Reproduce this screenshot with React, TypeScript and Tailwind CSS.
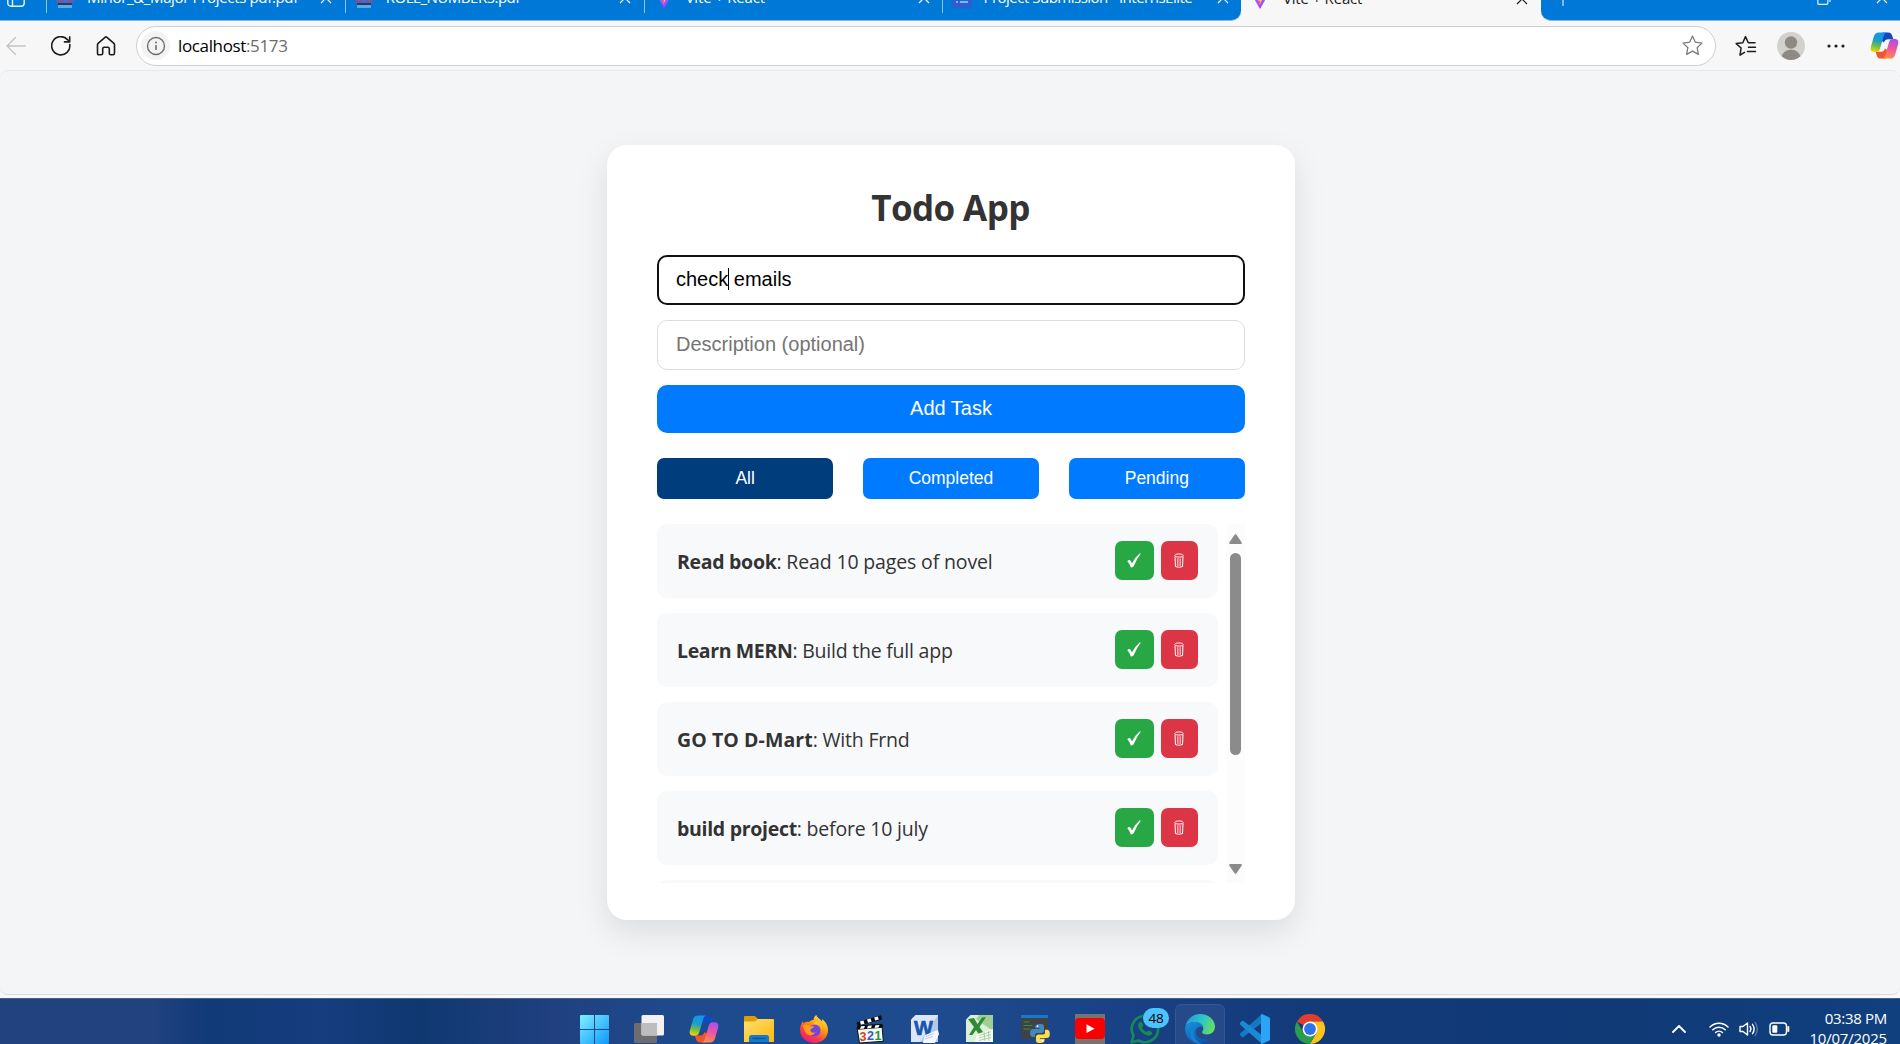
import type { ReactNode } from "react";

function CloseGlyph({ className = "" }: { className?: string }) {
  return (
    <svg viewBox="0 0 12 12" className={"h-3 w-3 shrink-0 " + className} fill="none" stroke="currentColor" strokeWidth="1.2">
      <path d="M1 1l10 10M11 1L1 11" />
    </svg>
  );
}

function PdfIcon() {
  return (
    <svg viewBox="0 0 18 20" className="h-5 w-[18px] shrink-0">
      <rect x="2" y="0" width="14" height="20" rx="1.5" fill="#4c9fe0" />
      <rect x="0" y="5" width="18" height="10" rx="1.5" fill="#7456a0" />
      <path d="M3.500 13.300v-2.500h2M8 10.500v2.500h2v-2.500M13 13.300v-2.500h2" fill="none" stroke="#2f7fd0" strokeWidth="1.300" />
      <rect x="2" y="15" width="14" height="2" fill="#17406f" />
      <rect x="2" y="17" width="14" height="3" fill="#5aabe6" />
    </svg>
  );
}

function ViteIcon({ id }: { id: string }) {
  return (
    <svg viewBox="0 0 20 20" className="h-5 w-5 shrink-0">
      <defs>
        <linearGradient id={id} x1="0" y1="0" x2="0.6" y2="1">
          <stop offset="0" stopColor="#41d1ff" />
          <stop offset="0.5" stopColor="#9a5bff" />
          <stop offset="1" stopColor="#bd34fe" />
        </linearGradient>
      </defs>
      <path d="M0.5 3.5L10 20l9.5-16.5L10 5z" fill={`url(#${id})`} />
      <path d="M13.5 0L7 1.5l-.4 8 2.2-.5-.7 3.4 1.8-.6-.6 4.4 4-7.4-2.2.4.8-3.4z" fill="#ffbd2e" />
    </svg>
  );
}

function FormsIcon() {
  return (
    <svg viewBox="0 0 20 20" className="h-5 w-5 shrink-0">
      <rect width="20" height="20" rx="1.5" fill="#2b5fd0" />
      <path d="M4 9h2M4 14h2M8 9h8M8 14h8" stroke="#7db8f5" strokeWidth="1.8" />
    </svg>
  );
}

type TabData = { title: string; icon: ReactNode; text: string };

const tabs: TabData[] = [
  { title: "Minor_&_Major Projects pdf.pdf", icon: <PdfIcon />, text: "ml-[13px] tracking-[-0.34px]" },
  { title: "ROLL_NUMBERS.pdf", icon: <PdfIcon />, text: "ml-[13px] tracking-[-0.48px]" },
  { title: "Vite + React", icon: <ViteIcon id="vite1" />, text: "ml-[12px] tracking-[-0.18px]" },
  { title: "Project Submission - InternsElite", icon: <FormsIcon />, text: "ml-[11px] tracking-[-0.5px]" },
];

function TabStrip() {
  return (
    <div className="flex h-[21px] items-end overflow-hidden bg-[#f7f7f7] text-[15px] text-white">
      <div className="flex h-[45px] w-[1241px] shrink-0 items-center rounded-br-[10px] border-b border-[#7fbcec] bg-[#0078d7]">
        <div className="w-[46px] shrink-0 pl-[7px]">
          <svg viewBox="0 0 18 18" className="h-[18px] w-[18px]" fill="none" stroke="#e8f4ff" strokeWidth="1.4">
            <rect x="0.8" y="0.8" width="16.4" height="16.4" rx="3" />
            <path d="M5.5 1v16M1 5.5h16" />
          </svg>
        </div>
        {tabs.map((t) => (
          <div key={t.title} className="flex w-[298.8px] shrink-0 items-center pr-[12.500px]">
            <span className="mr-[9px] h-[30px] w-px bg-[#8cc4f0]" />
            {t.icon}
            <span className={"pb-[2px] leading-5 whitespace-nowrap " + t.text}>{t.title}</span>
            <CloseGlyph className="ml-auto" />
          </div>
        ))}
      </div>
      <div className="flex h-[45px] w-[300px] shrink-0 items-center pr-[13px] pl-[9px] text-[#1b1b1b]">
        <ViteIcon id="vite2" />
        <span className="ml-[13px] pb-[2px] leading-5 whitespace-nowrap tracking-[-0.18px]">Vite + React</span>
        <CloseGlyph className="ml-auto" />
      </div>
      <div className="flex h-[45px] flex-1 items-center rounded-bl-[10px] border-b border-[#7fbcec] bg-[#0078d7] pr-[12px] pl-[14px]">
        <svg viewBox="0 0 16 16" className="h-4 w-4" stroke="#d8ecfd" strokeWidth="1.2">
          <path d="M8 0v16M0 8h16" />
        </svg>
        <svg viewBox="0 0 14 14" className="mr-[45px] ml-auto h-[14px] w-[14px]" fill="none" stroke="#e8f4ff" strokeWidth="1.2">
          <rect x="0.8" y="3" width="10" height="10.3" rx="1" />
          <path d="M3 1h8.5q1.5 0 1.5 1.5V11" />
        </svg>
        <CloseGlyph />
      </div>
    </div>
  );
}

function CopilotIcon({ id, className = "" }: { id: string; className?: string }) {
  return (
    <svg viewBox="0 0 30 28" className={"shrink-0 " + className}>
      <defs>
        <linearGradient id={id + "a"} x1="0.5" y1="0" x2="0.3" y2="1">
          <stop offset="0" stopColor="#1495f0" />
          <stop offset="0.4" stopColor="#1a9ec8" />
          <stop offset="0.7" stopColor="#6fbe4a" />
          <stop offset="1" stopColor="#f7d400" />
        </linearGradient>
        <linearGradient id={id + "b"} x1="0.6" y1="0" x2="0.4" y2="1">
          <stop offset="0" stopColor="#a850ee" />
          <stop offset="0.5" stopColor="#f0569a" />
          <stop offset="1" stopColor="#ff8c4a" />
        </linearGradient>
      </defs>
      <path d="M13 .5h6c2 0 3.200 1 3.900 3l1.300 4H19c-2.500 0-3.600 1-4.500 3.500L12 9z" fill="#1149c4" />
      <path d="M17 27.500h-6c-2 0-3.200-1-3.900-3l-1.300-4H11c2.500 0 3.600-1 4.500-3.500L18 19z" fill="#f2552c" />
      <path d="M9 .5h8.500c-2.300.5-3 2.200-3.600 4.500l-3.500 12c-.8 2.600-1.800 3.700-4.200 3.700H4.500C1 20.700 0 18.500 1 15L4 4.500C5 1.700 6.500.5 9 .5z" fill={`url(#${id}a)`} />
      <path d="M21 27.500h-8.500c2.300-.5 3-2.200 3.600-4.500l3.500-12c.8-2.600 1.800-3.700 4.200-3.700h1.700C29 7.300 30 9.500 29 13l-3 10.500c-1 2.800-2.500 4-5 4z" fill={`url(#${id}b)`} />
    </svg>
  );
}

function Toolbar() {
  return (
    <div className="flex h-[49px] items-center bg-[#f7f7f7] pl-[6px] text-[#1d1d1d]">
      <svg viewBox="0 0 20 20" className="h-5 w-5" fill="none" stroke="#c4c4c4" strokeWidth="1.4" strokeLinecap="round" strokeLinejoin="round">
        <path d="M19.300 10H1M9.500 1.500L1 10l8.500 8.500" />
      </svg>
      <svg viewBox="0 0 20 20" className="ml-[25px] h-5 w-5" fill="none" stroke="currentColor" strokeWidth="1.6" strokeLinecap="round" strokeLinejoin="round">
        <path d="M18.800 8.500A9.100 9.100 0 1 1 16.500 3.600L18.600 5.400M18.700 0.900v5h-5.200" />
      </svg>
      <svg viewBox="0 0 20 20" className="ml-[25px] h-5 w-5" fill="none" stroke="currentColor" strokeWidth="1.6" strokeLinejoin="round">
        <path d="M1.500 8.700Q1.500 7.900 2.100 7.400L9 1.300Q10 .5 11 1.300L17.900 7.400Q18.500 7.900 18.500 8.700V17q0 1.800-1.500 1.800h-2.200q-1.500 0-1.500-1.500v-4.500q0-1.500-1.500-1.500H8.200q-1.500 0-1.500 1.500v4.500q0 1.500-1.500 1.500H3q-1.500 0-1.500-1.800z" />
      </svg>
      <div className="ml-[20px] flex h-10 w-[1580px] items-center rounded-full border border-[#cfcfcf] bg-white pr-[12px] pl-[4px]">
        <div className="flex h-[29px] w-[29px] items-center justify-center rounded-full bg-[#f3f3f3]">
          <svg viewBox="0 0 20 20" className="h-5 w-5" fill="none" stroke="#707070" strokeWidth="1.4">
            <circle cx="10" cy="10" r="8.500" />
            <path d="M10 9v5" strokeWidth="1.600" />
            <circle cx="10" cy="6.500" r="1" fill="#707070" stroke="none" />
          </svg>
        </div>
        <div className="ml-[8px] text-[17px] leading-5 tracking-[-0.36px] text-black">
          localhost<span className="text-[#6b6b6b]">:5173</span>
        </div>
        <svg viewBox="0 0 20 20" className="ml-auto h-[21px] w-[21px]" fill="none" stroke="#7a7a7a" strokeWidth="1.200" strokeLinejoin="round">
          <path d="M10 1l2.700 5.900 6.300.8-4.600 4.400 1.200 6.400L10 15.400 4.400 18.500l1.200-6.400L1 7.700l6.300-.8z" />
        </svg>
      </div>
      <svg viewBox="0 0 22 22" className="ml-[19px] h-[22px] w-[22px]" fill="none" stroke="currentColor" strokeWidth="1.500" strokeLinejoin="round" strokeLinecap="round">
        <path d="M9.500 17.300L5 20.200l1.100-7.200L1.200 8.600 7.800 7.800 10.500 1.600 13.300 7.800H20M13.500 12.200H20.500M12.500 16.600H20.500" />
      </svg>
      <svg viewBox="0 0 28 28" className="ml-[20px] h-7 w-7">
        <circle cx="14" cy="14" r="14" fill="#d3d1ce" />
        <circle cx="14" cy="10.500" r="6.200" fill="#8d8a86" />
        <path d="M4.600 24.300C6.500 19.500 10 17.800 14 17.800s7.500 1.700 9.400 6.500A14 14 0 0 1 4.600 24.300z" fill="#8d8a86" />
      </svg>
      <svg viewBox="0 0 18 4" className="ml-[21.500px] h-1 w-[18px]" fill="#1d1d1d">
        <circle cx="2" cy="2" r="1.600" />
        <circle cx="9" cy="2" r="1.600" />
        <circle cx="16" cy="2" r="1.600" />
      </svg>
      <CopilotIcon id="edge-copilot" className="ml-[25.500px] h-[27px] w-[29px]" />
    </div>
  );
}

type Task = { name: string; detail: string; nameTrack: string; detailTrack: string };

const tasks: Task[] = [
  { name: "Read book", detail: ": Read 10 pages of novel", nameTrack: "tracking-[-0.3px]", detailTrack: "tracking-[-0.15px]" },
  { name: "Learn MERN", detail: ": Build the full app", nameTrack: "tracking-[-0.37px]", detailTrack: "tracking-[-0.22px]" },
  { name: "GO TO D-Mart", detail: ": With Frnd", nameTrack: "tracking-[0.08px]", detailTrack: "tracking-[-0.2px]" },
  { name: "build project", detail: ": before 10 july", nameTrack: "tracking-[-0.3px]", detailTrack: "tracking-[-0.2px]" },
];

function TaskRow({ task }: { task: Task }) {
  return (
    <li className="flex h-[74px] shrink-0 items-center rounded-[10px] bg-[#f8f9fb] pr-5 pl-[20px]">
      <p className="pt-[2px] text-[19.500px] leading-7 whitespace-nowrap">
        <strong className={"font-bold " + task.nameTrack}>{task.name}</strong>
        <span className={task.detailTrack}>{task.detail}</span>
      </p>
      <button className="mb-[2px] ml-auto flex h-[39px] w-[39px] items-center justify-center rounded-[7px] bg-[#28a745] pt-px pr-[2px]">
        <svg viewBox="0 0 14 15" className="h-[15px] w-[14px]">
          <path d="M.3 8.300Q1.600 6.600 3 7.200Q4.200 8.200 4.900 10.400Q8.400 3.800 12.600.4L13.900.6Q9.600 6 6.500 13.600Q5 14.800 3.700 14.200Q2.300 10.200.3 8.300z" fill="#fff" />
        </svg>
      </button>
      <button className="mb-[2px] ml-[7px] flex h-[39px] w-[37px] items-center justify-center rounded-[7px] bg-[#dc3545] pt-px pr-px">
        <svg viewBox="0 0 10 15" className="h-[15px] w-[10px]" fill="none" stroke="#fff0f1">
          <path d="M1 3.300L1.500 13.300Q5 15.300 8.500 13.300L9 3.300" strokeWidth="1.100" />
          <ellipse cx="5" cy="2.500" rx="4.200" ry="1.600" strokeWidth="1" />
          <path d="M3.400 5.200L3.600 13M5 5.200V13M6.600 5.200L6.400 13" strokeWidth=".8" stroke="#f9cdd2" />
        </svg>
      </button>
    </li>
  );
}

function TodoCard() {
  return (
    <section className="flex h-[775px] w-[688px] flex-col rounded-[20px] bg-white px-[50px] pt-[38px] text-[#333] shadow-[0_12px_32px_rgba(0,0,0,0.1)]">
      <h1 className="pr-px text-center text-[35px] leading-[50px] font-bold tracking-[-0.6px]">Todo App</h1>
      <div className="mt-[22px] flex h-[50px] items-center rounded-[10px] border-2 border-[#101010] bg-white px-[17px] pb-[3px] font-['Liberation_Sans',Arial,sans-serif] text-[20px] text-black">
        <span>check</span>
        <span className="-mr-px h-[22px] w-px bg-black" />
        <span className="whitespace-pre"> emails</span>
      </div>
      <div className="mt-[15px] flex h-[50px] items-center rounded-[10px] border border-[#ddd] px-[18px] pb-[3px] font-['Liberation_Sans',Arial,sans-serif] text-[20px] text-[#757575]">
        Description (optional)
      </div>
      <button className="mt-[15px] h-12 rounded-[10px] bg-[#007bff] pb-[3px] font-['Liberation_Sans',Arial,sans-serif] text-[20px] text-white">
        Add Task
      </button>
      <div className="mt-[25px] grid grid-cols-3 gap-[29.500px] font-['Liberation_Sans',Arial,sans-serif] text-[17.500px] text-white">
        <button className="h-[41px] rounded-[7px] bg-[#003d7c]">All</button>
        <button className="h-[41px] rounded-[7px] bg-[#007bff]">Completed</button>
        <button className="h-[41px] rounded-[7px] bg-[#007bff]">Pending</button>
      </div>
      <div className="mt-[25px] flex h-[359px] gap-[8px] overflow-hidden">
        <ul className="flex flex-1 flex-col gap-[15px] overflow-hidden">
          {tasks.map((t) => (
            <TaskRow key={t.name} task={t} />
          ))}
          <li className="h-[74px] shrink-0 rounded-[10px] bg-[#f8f9fb]" />
        </ul>
        <div className="flex w-[19px] flex-col items-center bg-[#fcfcfc] pt-[10px] pb-[9px]">
          <svg viewBox="0 0 13 10" className="h-[10px] w-[13px]" fill="#8b8b8b">
            <path d="M5.300 1q1.200-1.500 2.400 0l5 7.400q.7 1.600-1 1.600H1.300Q-.4 10 .3 8.400z" />
          </svg>
          <span className="mt-[9px] h-[202px] w-[11px] rounded-full bg-[#8b8b8b]" />
          <svg viewBox="0 0 13 10" className="mt-auto h-[10px] w-[13px]" fill="#8b8b8b">
            <path d="M5.300 9q1.200 1.500 2.400 0l5-7.400Q13.400 0 11.700 0H1.300Q-.4 0 .3 1.600z" />
          </svg>
        </div>
      </div>
    </section>
  );
}

function WindowsIcon() {
  return (
    <svg viewBox="0 0 29 29" className="h-[29px] w-[29px]">
      <defs>
        <linearGradient id="win" x1="0" y1="0" x2="29" y2="29" gradientUnits="userSpaceOnUse">
          <stop offset="0" stopColor="#7df0ff" />
          <stop offset="1" stopColor="#0e98f8" />
        </linearGradient>
      </defs>
      <path d="M1 0H14V14H0V1Q0 0 1 0zM15 0H28Q29 0 29 1V14H15zM0 15H14V29H1Q0 29 0 28zM15 15H29V28Q29 29 28 29H15z" fill="url(#win)" />
    </svg>
  );
}

function TaskViewIcon() {
  return (
    <svg viewBox="0 0 30 28" className="h-7 w-[30px]">
      <rect x="0" y="8" width="23" height="20" rx="1.500" fill="#6d6d6f" />
      <rect x="7.500" y="0" width="22.500" height="20.500" rx="1.500" fill="#f2f2f3" />
      <path d="M7.500 8H23v12.500H9q-1.500 0-1.500-1.500z" fill="#bdbdbf" />
    </svg>
  );
}

function FolderIcon() {
  return (
    <svg viewBox="0 0 30 28" className="h-7 w-[30px]">
      <defs>
        <linearGradient id="fold" x1="0" y1="0" x2="1" y2="1">
          <stop offset="0" stopColor="#ffdf70" />
          <stop offset="1" stopColor="#fbb90f" />
        </linearGradient>
      </defs>
      <path d="M0 2q0-1 1-1h9q1 0 2 1l2 2v4H0z" fill="#e09c05" />
      <path d="M0 6.500h11l3-2.500h15q1 0 1 1v22H0z" fill="url(#fold)" />
      <path d="M5 27v-4.500q0-2.500 2.500-2.500h15q2.500 0 2.500 2.500V27z" fill="#0f7ad0" />
      <path d="M8.500 23.500h13" stroke="#0a4f92" strokeWidth="1.200" />
    </svg>
  );
}

function FirefoxIcon() {
  return (
    <svg viewBox="0 0 30 30" className="h-[30px] w-[30px]">
      <defs>
        <linearGradient id="ff" x1="0.85" y1="0" x2="0.2" y2="1">
          <stop offset="0" stopColor="#fff04a" />
          <stop offset="0.4" stopColor="#ff980e" />
          <stop offset="0.7" stopColor="#ff3d47" />
          <stop offset="1" stopColor="#e31587" />
        </linearGradient>
      </defs>
      <path d="M17.500 1c.5 3 4 4 5.500 6.500.3-.8 0-1.800-.3-2.500C27 7.500 29 12 29 16 29 23.700 23 29 15.300 29S1 23.500 1 16c0-4 1.600-7 3-9 0 1 .3 1.800.8 2.300C6 8 8 7.500 10 8c1.500-1.500 3-2 4.500-2 0-2 1.200-4 3-5z" fill="url(#ff)" />
      <circle cx="15.500" cy="16.500" r="6" fill="#7445dc" />
      <path d="M3.500 11.500C6.500 9.500 9.500 11 11 12.300h4c-.3 2-3 2-3.600 3.500-.2 2 2 3.700 5 2.500-2 4-8.500 4-10.500-.8C5 15.500 4.500 13.500 3.500 11.500z" fill="#ff9c1a" />
      <path d="M14.500 10.600c4-1.600 8 1 8 5.500 2-4-.5-9-4-9.500-2 .4-4 2-4 4z" fill="#ffc125" />
    </svg>
  );
}

function MediaPlayerIcon() {
  return (
    <svg viewBox="0 0 30 30" className="h-[30px] w-[30px] font-['Liberation_Sans',sans-serif]">
      <path d="M1.500 8.500L26 1.200l1.200 4.300L2.700 12z" fill="#0c0c0c" />
      <path d="M5 7.600l3.500-1 1 3.200-3.600 1zM12 5.500l3.600-1 1 3.300-3.600.9zM19.200 3.400l3.600-1 1 3.200-3.600 1z" fill="#fff" />
      <path d="M2 13.500L27 11.300l1.300 16L4.500 29z" fill="#f7f7f5" stroke="#111" strokeWidth="1" />
      <path d="M2 11.500l25.500-1.700.2 4L2.300 15.700z" fill="#0c0c0c" />
      <path d="M6 12.200l4-.3-1 2.700-4 .3zM13 11.700l4-.3-1 2.700-4 .3zM20.500 11.200l4-.3-1 2.700-4 .3z" fill="#fff" />
      <g fontSize="12.500" fontWeight="700">
        <text x="4.500" y="26.500" fill="#d2451a">3</text>
        <text x="12" y="26" fill="#2c62b8">2</text>
        <text x="19.500" y="25.500" fill="#24952f">1</text>
      </g>
    </svg>
  );
}

function WordIcon() {
  return (
    <svg viewBox="0 0 28 28" className="h-7 w-7">
      <path d="M0 4.500L4.500 0H27v27H0z" fill="#dbe6f6" />
      <path d="M27 0v27H9z" fill="#b3c9ea" />
      <text x="12.500" y="19.500" textAnchor="middle" fontSize="20" fontWeight="700" fontFamily="Liberation Sans, sans-serif" fill="#1755ae" stroke="#1755ae" strokeWidth=".6">W</text>
      <path d="M14 20l13-5 1 4-4 9H12z" fill="#f5f8fd" />
      <path d="M15 21.500l8-3M14 24l8-2.500" stroke="#a9bede" strokeWidth=".8" />
    </svg>
  );
}

function ExcelIcon() {
  return (
    <svg viewBox="0 0 28 28" className="h-7 w-7">
      <path d="M0 4.500L4.500 0H27v27H0z" fill="#dcefd8" />
      <path d="M27 0v16L10 4l3-4z" fill="#9fcf95" />
      <path d="M2 4l6-1 3.500 6L16 2.500l4-.5-6.500 10L19 20h-6l-3-5-3.500 5H3l5-8z" fill="#2f8a34" />
      <path d="M11 19l16-5v13H9z" fill="#f7fbf5" />
      <path d="M13 20.500l12-3.800M13 23l12-3.500M13 25.500l12-3M18 17l1 9M22.500 16l.5 10" stroke="#9cc594" strokeWidth=".8" />
    </svg>
  );
}

function PythonIcon() {
  return (
    <svg viewBox="0 0 30 30" className="h-[30px] w-[30px]">
      <rect x="1" y="1" width="27" height="24" fill="#3e4247" />
      <rect x="1" y="1" width="27" height="3" fill="#1878c9" />
      <path d="M3.500 8h6M3.500 11.500h9M3.500 15h7" stroke="#3c8a3e" strokeWidth="1.200" />
      <path d="M19.800 10c4 0 4.200 1.300 4.200 3v3.500c0 1.500-1 2.500-2.500 2.500h-4.500c-1.500 0-2 1-2 2v2h-2c-2 0-3-1.500-3-4s1-4 3-4h6.800v-.8h-4.600V13c0-2 1.600-3 4.600-3z" fill="#4387bd" />
      <path d="M20.200 29c-4 0-4.200-1.300-4.200-3v-3c0-1.500 1-2.500 2.500-2.500H23c1.500 0 2-1 2-2v-2.700h2c2 0 2.800 1.700 2.800 4.200s-1 4-3 4H20v.8h4.600V26c0 2-1.400 3-4.400 3z" fill="#ffdc55" />
      <circle cx="17.500" cy="12.200" r=".9" fill="#fff" />
      <circle cx="22.600" cy="26.800" r=".9" fill="#fff" />
    </svg>
  );
}

function YoutubeIcon() {
  return (
    <svg viewBox="0 0 30 30" className="h-[30px] w-[30px]">
      <rect width="30" height="30" fill="#777372" />
      <rect x="0" y="4" width="30" height="21" rx="4" fill="#fb0000" />
      <path d="M11.500 10.300L19.500 14.700l-8 4.400z" fill="#fff" />
    </svg>
  );
}

function WhatsappIcon() {
  return (
    <div className="relative h-[30px] w-[30px]">
      <svg viewBox="0 0 30 30" className="h-[30px] w-[30px]">
        <path d="M1.600 28.300L3.500 21.500A13.200 13.200 0 1 1 8.600 26.500z" fill="none" stroke="#158a55" strokeWidth="2.600" strokeLinejoin="round" />
        <path d="M9.300 8.500c1-1.300 2.200-1 2.600 0l1.200 2.700c.2.700-.9 1.700-1.200 2.200 1 2 2.600 3.600 5 4.600.7-.6 1.300-1.700 2-1.500l2.800 1.400c1 .5.500 2.200-.7 3-3 2-7.500-.4-10-3.300-2.200-2.500-4-6.300-1.700-9.100z" fill="#158a55" />
      </svg>
      <span className="absolute -top-[6px] left-[13px] flex h-5 w-[26px] items-center justify-center rounded-full bg-[#4cc2ff] text-[13.500px] tracking-[-0.3px] text-black">
        48
      </span>
    </div>
  );
}

function EdgeIcon() {
  return (
    <svg viewBox="0 0 30 30" className="h-[30px] w-[30px]">
      <defs>
        <linearGradient id="edge-top" x1="0" y1="0.3" x2="1" y2="0.6">
          <stop offset="0" stopColor="#1f9de0" />
          <stop offset="0.5" stopColor="#2ec3c9" />
          <stop offset="1" stopColor="#68e05a" />
        </linearGradient>
        <linearGradient id="edge-low" x1="0" y1="0" x2="0.8" y2="1">
          <stop offset="0" stopColor="#1793e0" />
          <stop offset="1" stopColor="#0b4fa6" />
        </linearGradient>
      </defs>
      <path d="M.3 13C1.500 5 8 0 15 0c8.500 0 15 6 15 12.500 0 5-3.800 8-8 8-3 0-5-1-5-2.200 0-.8 1.300-1.500 1.300-3.700C18.300 11 14.500 8 10 8 5.500 8 1.700 10 .3 13z" fill="url(#edge-top)" />
      <path d="M.2 13.300C2 9.800 6 8 10 8c4.300 0 7.500 2.500 8.200 5.400-1.400-.9-3.800-.9-5.700.6-2.500 2-2.700 6 .3 8.700 4 3.500 10.300 2.800 14.700.3C25 27.500 20.500 30 15 30 6.500 30-.7 22.500.2 13.300z" fill="url(#edge-low)" />
      <path d="M10 13.500c-3.200 4.500-1.200 13 6.500 16.400C10.500 30.400 5 25.500 5 20c0-3 2-5.500 5-6.500z" fill="#1583d5" />
    </svg>
  );
}

function VsCodeIcon() {
  return (
    <svg viewBox="0 0 30 30" className="h-[30px] w-[30px]">
      <path d="M22 0L0 19.500v1.500l2 2q.8.500 1.500 0L22 8.800z" fill="#1279c2" />
      <path d="M22 30L0 10.500V9l2-2q.8-.5 1.500 0L22 21.200z" fill="#1a8ad4" />
      <path d="M22 0l7 3.200q1 .5 1 1.600v20.400q0 1.100-1 1.600L22 30q-1 0-1-1V1q0-1 1-1z" fill="#2aa5f5" />
    </svg>
  );
}

function ChromeIcon() {
  return (
    <svg viewBox="0 0 30 30" className="h-[30px] w-[30px]">
      <path d="M15 15L2 7.500A15 15 0 0 1 28 7.500H15z" fill="#e33b2e" />
      <path d="M15 7.500H28A15 15 0 0 1 15 30L21.500 18.800z" fill="#fcc31e" />
      <path d="M2 7.500A15 15 0 0 0 15 30L21.500 18.800 8.500 18.800z" fill="#2c9e4b" />
      <circle cx="15" cy="15" r="7.500" fill="#fff" />
      <circle cx="15" cy="15" r="5.900" fill="#2d74e8" />
    </svg>
  );
}

const apps: { name: string; icon: ReactNode; active?: boolean }[] = [
  { name: "start", icon: <WindowsIcon /> },
  { name: "taskview", icon: <TaskViewIcon /> },
  { name: "copilot", icon: <CopilotIcon id="bar-copilot" className="h-[28px] w-[30px]" /> },
  { name: "explorer", icon: <FolderIcon /> },
  { name: "firefox", icon: <FirefoxIcon /> },
  { name: "player", icon: <MediaPlayerIcon /> },
  { name: "word", icon: <WordIcon /> },
  { name: "excel", icon: <ExcelIcon /> },
  { name: "python", icon: <PythonIcon /> },
  { name: "youtube", icon: <YoutubeIcon /> },
  { name: "whatsapp", icon: <WhatsappIcon /> },
  { name: "edge", icon: <EdgeIcon />, active: true },
  { name: "vscode", icon: <VsCodeIcon /> },
  { name: "chrome", icon: <ChromeIcon /> },
];

function Taskbar() {
  return (
    <div className="h-[46px] overflow-hidden border-t border-[#46608c] bg-[linear-gradient(90deg,#21427f_0%,#21427f_8%,#103a78_11%,#163d7e_17%,#0f3871_22%,#20407f_29%,#1e4b8d_36%,#1d4b8e_50%,#173f82_62%,#123a78_70%,#0f3a76_85%,#11407f_100%)]">
      <div className="flex h-[60px] pl-[566.500px]">
        {apps.map((a) => (
          <div key={a.name} className="flex w-[55.1px] shrink-0 items-center justify-center">
            {a.active ? (
              <div className="flex h-[50px] w-[50px] items-center justify-center rounded-[6px] border border-[#35568f] bg-[#26498a]">{a.icon}</div>
            ) : (
              a.icon
            )}
          </div>
        ))}
        <div className="ml-auto flex items-center pr-[13px] text-white">
          <svg viewBox="0 0 14 8" className="h-2 w-[14px]" fill="none" stroke="#fff" strokeWidth="1.800" strokeLinecap="round" strokeLinejoin="round">
            <path d="M1 7l6-6 6 6" />
          </svg>
          <svg viewBox="0 0 20 16" className="ml-[23px] h-4 w-5" fill="none" stroke="#fff" strokeWidth="1.500" strokeLinecap="round">
            <path d="M1 6a12.500 12.500 0 0 1 18 0M3.800 8.800a8.700 8.700 0 0 1 12.400 0M6.600 11.500a4.900 4.900 0 0 1 6.800 0" />
            <circle cx="10" cy="14" r="1.700" fill="#fff" stroke="none" />
          </svg>
          <svg viewBox="0 0 20 16" className="ml-[10px] h-4 w-5" fill="none" stroke="#fff" strokeWidth="1.400" strokeLinecap="round" strokeLinejoin="round">
            <path d="M1 5.500v5h3L8.500 14V2L4 5.500z" />
            <path d="M11 5.500q1.800 2.500 0 5M13.500 3.300q3.200 4.700 0 9.400" />
            <path d="M16.200 1.500q4.400 6.500 0 13" stroke="#5877a5" />
          </svg>
          <svg viewBox="0 0 21 14" className="ml-[10px] h-[14px] w-[21px]" fill="none" stroke="#fff" strokeWidth="1.400">
            <rect x="1" y="1" width="16.500" height="12" rx="3" />
            <rect x="3.300" y="3.300" width="5" height="7.400" rx="1" fill="#fff" stroke="none" />
            <path d="M19.300 5v4" strokeWidth="2" strokeLinecap="round" />
          </svg>
          <div className="ml-[19px] pb-[3px] text-right text-[15px] leading-5 whitespace-nowrap">
            <p className="tracking-[-0.3px]">03:38 PM</p>
            <p className="tracking-[-0.2px]">10/07/2025</p>
          </div>
        </div>
      </div>
    </div>
  );
}

export default function App() {
  return (
    <div className="flex h-[1044px] w-[1900px] flex-col overflow-hidden bg-[#f8f8f8] font-['Open_Sans','Noto_Sans',sans-serif]">
      <TabStrip />
      <Toolbar />
      <main className="mb-[3px] flex flex-1 justify-center rounded-[8px] border-t border-b border-t-[#e6e9ea] border-b-[#d9dbdd] bg-[#f4f5f7] pt-[74px] pl-[2px]">
        <TodoCard />
      </main>
      <Taskbar />
    </div>
  );
}
